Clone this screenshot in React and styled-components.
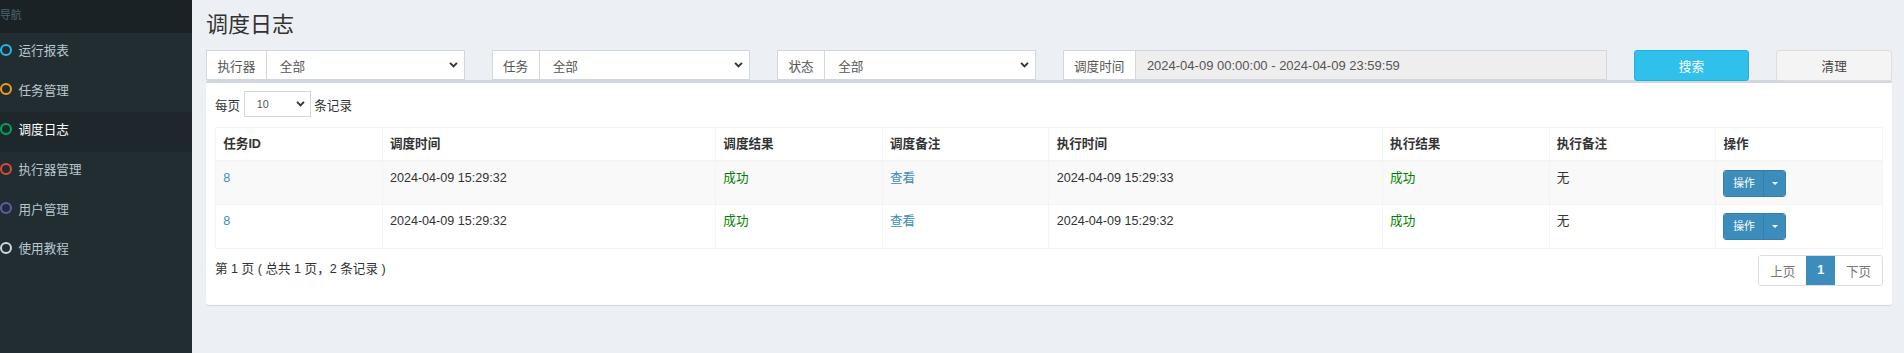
import React from 'react';
import styled, { createGlobalStyle } from 'styled-components';

const GlobalStyle = createGlobalStyle`
  body {
    margin: 0;
    background: #ecf0f5;
    font-family: "Liberation Sans", "Noto Sans CJK SC", sans-serif;
    font-size: 12.6px;
    color: #333;
  }
`;

const Layout = styled.div`
  display: flex;
  min-height: 353px;
`;

const Sidebar = styled.aside`
  width: 192px;
  flex: none;
  background: #222d32;
`;

const SideHeader = styled.div`
  height: 33px;
  line-height: 31px;
  background: #1a2226;
  color: #4b646f;
  font-size: 10.8px;
`;

const MenuItem = styled.div`
  display: flex;
  align-items: center;
  height: 39.6px;
  box-sizing: border-box;
  padding-bottom: 6px;
  color: ${p => (p.$active ? '#fff' : '#b8c7ce')};
  background: ${p => (p.$active ? '#1e282c' : 'transparent')};
`;

const Ring = styled.span`
  box-sizing: border-box;
  width: 12px;
  height: 12px;
  border-radius: 50%;
  border: 2px solid ${p => p.$color};
  margin-right: 6.5px;
`;

const Main = styled.main`
  flex: 1;
  min-width: 0;
  padding: 0 12px 0 14px;
`;

const Title = styled.h1`
  margin: 0 0 12px;
  padding-top: 12px;
  font-size: 22px;
  line-height: 26px;
  font-weight: 400;
  color: #333;
`;

const FilterRow = styled.div`
  display: grid;
  grid-template-columns: repeat(12, 1fr);
  column-gap: 27px;
  height: 30px;
`;

const InputGroup = styled.div`
  grid-column: span ${p => p.$span};
  display: flex;
  height: 30px;
  box-sizing: border-box;
`;

const Addon = styled.span`
  display: flex;
  align-items: center;
  padding: 0 10.5px;
  border: 1px solid #d2d6de;
  background: #fff;
  color: #555;
`;

const SelectBox = styled.div`
  flex: 1;
  display: flex;
  align-items: center;
  justify-content: space-between;
  padding: 0 6px 0 13px;
  border: 1px solid #d2d6de;
  border-left: none;
  background: #fff;
  color: #555;
`;

const DateInput = styled.div`
  flex: 1;
  display: flex;
  align-items: center;
  padding-left: 11px;
  border: 1px solid #d2d6de;
  border-left: none;
  background: #eee;
  color: #555;
  font-size: 13px;
`;

const Button = styled.button`
  grid-column: span 1;
  height: 30.5px;
  border-radius: 3px;
  font: inherit;
  border: 1px solid ${p => (p.$primary ? '#1fb2de' : '#ddd')};
  background: ${p => (p.$primary ? '#2fc0ec' : '#f4f4f4')};
  color: ${p => (p.$primary ? '#fff' : '#444')};
  position: relative;
  z-index: 1;
`;

const Box = styled.section`
  background: #fff;
  border-top: 3px solid #d2d6de;
  border-radius: 3px;
  box-shadow: 0 1px 1px rgba(0, 0, 0, 0.1);
  padding: 8px 9px 19px;
`;

const LengthRow = styled.div`
  display: flex;
  align-items: center;
  gap: 3.5px;
`;

const SmallSelect = styled.div`
  display: flex;
  align-items: center;
  justify-content: space-between;
  width: 67px;
  height: 26px;
  box-sizing: border-box;
  padding: 0 5px 0 12px;
  border: 1px solid #d2d6de;
  font-size: 10.8px;
  color: #555;
`;

const Table = styled.table`
  width: 100%;
  margin-top: 10px;
  border-collapse: collapse;
  border: 1px solid #f4f4f4;
  line-height: 18px;
`;

const Th = styled.th`
  width: ${p => p.$w};
  padding: 7.2px;
  text-align: left;
  font-weight: 700;
  border: 1px solid #f4f4f4;
  border-bottom-width: 2px;
`;

const Row = styled.tr`
  background: ${p => (p.$striped ? '#f9f9f9' : '#fff')};
`;

const Td = styled.td`
  padding: 6.5px 7.2px 7.9px;
  vertical-align: top;
  border: 1px solid #f4f4f4;
  color: ${p => p.$color || '#333'};
`;

const ActionGroup = styled.div`
  display: inline-flex;
  height: 27px;
  margin-top: 0.7px;
  border-radius: 3px;
  overflow: hidden;
  border: 1px solid #367fa9;
  box-sizing: border-box;
`;

const ActionMain = styled.span`
  display: flex;
  align-items: center;
  justify-content: center;
  width: 39px;
  background: #3c8dbc;
  color: #fff;
  font-size: 10.8px;
  border-right: 1px solid #367fa9;
`;

const ActionCaret = styled.span`
  display: flex;
  align-items: center;
  justify-content: center;
  width: 21px;
  background: #3c8dbc;

  &::after {
    content: '';
    border-top: 3.5px solid #fff;
    border-left: 3px solid transparent;
    border-right: 3px solid transparent;
  }
`;

const Footer = styled.div`
  display: flex;
  justify-content: space-between;
  align-items: flex-start;
  margin-top: 6px;
`;

const Info = styled.div`
  padding-top: 3.5px;
`;

const Pager = styled.div`
  display: flex;
  height: 31px;
  border: 1px solid #ddd;
  border-radius: 3px;
  overflow: hidden;
  box-sizing: border-box;
`;

const PageLink = styled.span`
  display: flex;
  align-items: center;
  padding: 0 ${p => (p.$active ? '11px' : '10.8px')};
  background: ${p => (p.$active ? '#3c8dbc' : '#fff')};
  color: ${p => (p.$active ? '#fff' : '#777')};
  font-weight: ${p => (p.$active ? 700 : 400)};
`;

const Chevron = () => (
  <svg width="9" height="6" viewBox="0 0 10 7">
    <polyline points="1,1 5,5.2 9,1" fill="none" stroke="#333" strokeWidth="2.2" />
  </svg>
);

const menu = [
  { label: '运行报表', color: '#29b6e8' },
  { label: '任务管理', color: '#f39c12' },
  { label: '调度日志', color: '#00a65a', active: true },
  { label: '执行器管理', color: '#dd4b39' },
  { label: '用户管理', color: '#605ca8' },
  { label: '使用教程', color: '#d2d6de' },
];

const columns = [
  ['任务ID', '10%'],
  ['调度时间', '20%'],
  ['调度结果', '10%'],
  ['调度备注', '10%'],
  ['执行时间', '20%'],
  ['执行结果', '10%'],
  ['执行备注', '10%'],
  ['操作', '10%'],
];

const logs = [
  { id: 8, trigger: '2024-04-09 15:29:32', handle: '2024-04-09 15:29:33' },
  { id: 8, trigger: '2024-04-09 15:29:32', handle: '2024-04-09 15:29:32' },
];

const Filter = ({ label, span = 2 }) => (
  <InputGroup $span={span}>
    <Addon>{label}</Addon>
    <SelectBox>
      <span>全部</span>
      <Chevron />
    </SelectBox>
  </InputGroup>
);

export default function App() {
  return (
    <>
      <GlobalStyle />
      <Layout>
        <Sidebar>
          <SideHeader>导航</SideHeader>
          {menu.map(m => (
            <MenuItem key={m.label} $active={m.active}>
              <Ring $color={m.color} />
              {m.label}
            </MenuItem>
          ))}
        </Sidebar>
        <Main>
          <Title>调度日志</Title>
          <FilterRow>
            <Filter label="执行器" />
            <Filter label="任务" />
            <Filter label="状态" />
            <InputGroup $span={4}>
              <Addon>调度时间</Addon>
              <DateInput>2024-04-09 00:00:00 - 2024-04-09 23:59:59</DateInput>
            </InputGroup>
            <Button $primary>搜索</Button>
            <Button>清理</Button>
          </FilterRow>
          <Box>
            <LengthRow>
              每页
              <SmallSelect>
                <span>10</span>
                <Chevron />
              </SmallSelect>
              条记录
            </LengthRow>
            <Table>
              <thead>
                <tr>
                  {columns.map(([name, w]) => (
                    <Th key={name} $w={w}>{name}</Th>
                  ))}
                </tr>
              </thead>
              <tbody>
                {logs.map((log, i) => (
                  <Row key={i} $striped={i % 2 === 0}>
                    <Td $color="#3c8dbc">{log.id}</Td>
                    <Td>{log.trigger}</Td>
                    <Td $color="#008000">成功</Td>
                    <Td $color="#3c8dbc">查看</Td>
                    <Td>{log.handle}</Td>
                    <Td $color="#008000">成功</Td>
                    <Td>无</Td>
                    <Td>
                      <ActionGroup>
                        <ActionMain>操作</ActionMain>
                        <ActionCaret />
                      </ActionGroup>
                    </Td>
                  </Row>
                ))}
              </tbody>
            </Table>
            <Footer>
              <Info>第 1 页 ( 总共 1 页，2 条记录 )</Info>
              <Pager>
                <PageLink>上页</PageLink>
                <PageLink $active>1</PageLink>
                <PageLink>下页</PageLink>
              </Pager>
            </Footer>
          </Box>
        </Main>
      </Layout>
    </>
  );
}
